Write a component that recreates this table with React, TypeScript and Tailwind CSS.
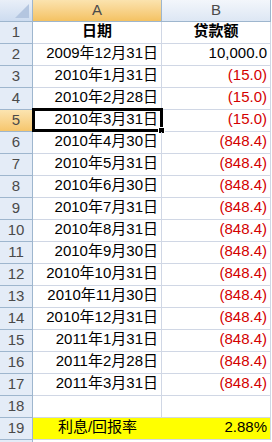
import React from 'react';

type Row = { date: string; amount: string; red?: boolean };

const rows: Row[] = [
  { date: '2009年12月31日', amount: '10,000.0' },
  { date: '2010年1月31日', amount: '(15.0)', red: true },
  { date: '2010年2月28日', amount: '(15.0)', red: true },
  { date: '2010年3月31日', amount: '(15.0)', red: true },
  { date: '2010年4月30日', amount: '(848.4)', red: true },
  { date: '2010年5月31日', amount: '(848.4)', red: true },
  { date: '2010年6月30日', amount: '(848.4)', red: true },
  { date: '2010年7月31日', amount: '(848.4)', red: true },
  { date: '2010年8月31日', amount: '(848.4)', red: true },
  { date: '2010年9月30日', amount: '(848.4)', red: true },
  { date: '2010年10月31日', amount: '(848.4)', red: true },
  { date: '2010年11月30日', amount: '(848.4)', red: true },
  { date: '2010年12月31日', amount: '(848.4)', red: true },
  { date: '2011年1月31日', amount: '(848.4)', red: true },
  { date: '2011年2月28日', amount: '(848.4)', red: true },
  { date: '2011年3月31日', amount: '(848.4)', red: true },
];

const font = { fontFamily: '"Liberation Sans", "Noto Sans CJK SC", sans-serif' };

const RowHead: React.FC<{ n?: number; active?: boolean }> = ({ n, active }) => (
  <div
    className={`w-[33px] h-[22px] shrink-0 flex items-center justify-center border-r border-b border-[#9eb6ce] text-[15px] text-[#4a4a4a] ${
      active ? 'bg-gradient-to-b from-[#fbe4b0] to-[#f6c66c]' : 'bg-[#e4ecf7]'
    }`}
  >
    {n}
  </div>
);

const App: React.FC = () => {
  return (
    <div className="w-[272px] h-[442px] overflow-hidden bg-white" style={font}>
      {/* column headers */}
      <div className="flex">
        <div className="w-[33px] h-[22px] shrink-0 border-r border-b border-[#9eb6ce] bg-gradient-to-b from-[#e9eff8] to-[#cddcf0] flex items-end justify-end p-[3px]">
          <svg width="14" height="14" viewBox="0 0 14 14">
            <polygon points="14,0 14,14 0,14" fill="#b4c6e0" />
          </svg>
        </div>
        <div className="w-[129px] h-[22px] shrink-0 border-r border-b border-[#9eb6ce] bg-gradient-to-b from-[#fbe3ae] to-[#f4c262] flex items-center justify-center text-[15px] text-[#4a4a4a]">
          A
        </div>
        <div className="w-[109px] h-[22px] shrink-0 border-r border-b border-[#9eb6ce] bg-gradient-to-b from-[#f3f6fb] to-[#dde7f4] flex items-center justify-center text-[15px] text-[#4a4a4a]">
          B
        </div>
      </div>

      {/* row 1 */}
      <div className="flex">
        <RowHead n={1} />
        <div className="w-[129px] h-[22px] shrink-0 border-r border-b border-[#d0d7e5] flex items-end justify-center pb-[1px] text-[15px] font-bold text-black">
          日期
        </div>
        <div className="w-[109px] h-[22px] shrink-0 border-r border-b border-[#d0d7e5] flex items-end justify-center pb-[1px] text-[15px] font-bold text-black">
          贷款额
        </div>
      </div>

      {rows.map((r, i) => {
        const n = i + 2;
        const sel = n === 5;
        return (
          <div key={n} className="flex">
            <RowHead n={n} active={sel} />
            <div className="relative w-[129px] h-[22px] shrink-0 border-r border-b border-[#d0d7e5] flex items-end justify-end pr-[3px] pb-[1px] text-[15px] text-black">
              {r.date}
              {sel && (
                <div className="absolute left-[-1px] top-[-2px] w-[131px] h-[24px] border-[3px] border-black">
                  <div className="absolute right-[-5px] bottom-[-5px] w-[7px] h-[7px] bg-black border border-white" />
                </div>
              )}
            </div>
            <div
              className={`w-[109px] h-[22px] shrink-0 border-r border-b border-[#d0d7e5] flex items-end justify-end pr-[3px] pb-[1px] text-[15px] ${
                r.red ? 'text-[#d40000]' : 'text-black'
              }`}
            >
              {r.amount}
            </div>
          </div>
        );
      })}

      {/* row 18 */}
      <div className="flex">
        <RowHead n={18} />
        <div className="w-[129px] h-[22px] shrink-0 border-r border-b border-[#d0d7e5]" />
        <div className="w-[109px] h-[22px] shrink-0 border-r border-b border-[#d0d7e5]" />
      </div>

      {/* row 19 */}
      <div className="flex">
        <RowHead n={19} />
        <div className="w-[129px] h-[22px] shrink-0 border-b border-[#d0d7e5] bg-[#ffff00] flex items-end justify-center pb-[1px] text-[15px] text-black">
          利息/回报率
        </div>
        <div className="w-[109px] h-[22px] shrink-0 border-r border-b border-[#d0d7e5] bg-[#ffff00] flex items-end justify-end pr-[3px] pb-[1px] text-[15px] text-black">
          2.88%
        </div>
      </div>

      <div className="flex">
        <RowHead />
      </div>
    </div>
  );
};

export default App;
